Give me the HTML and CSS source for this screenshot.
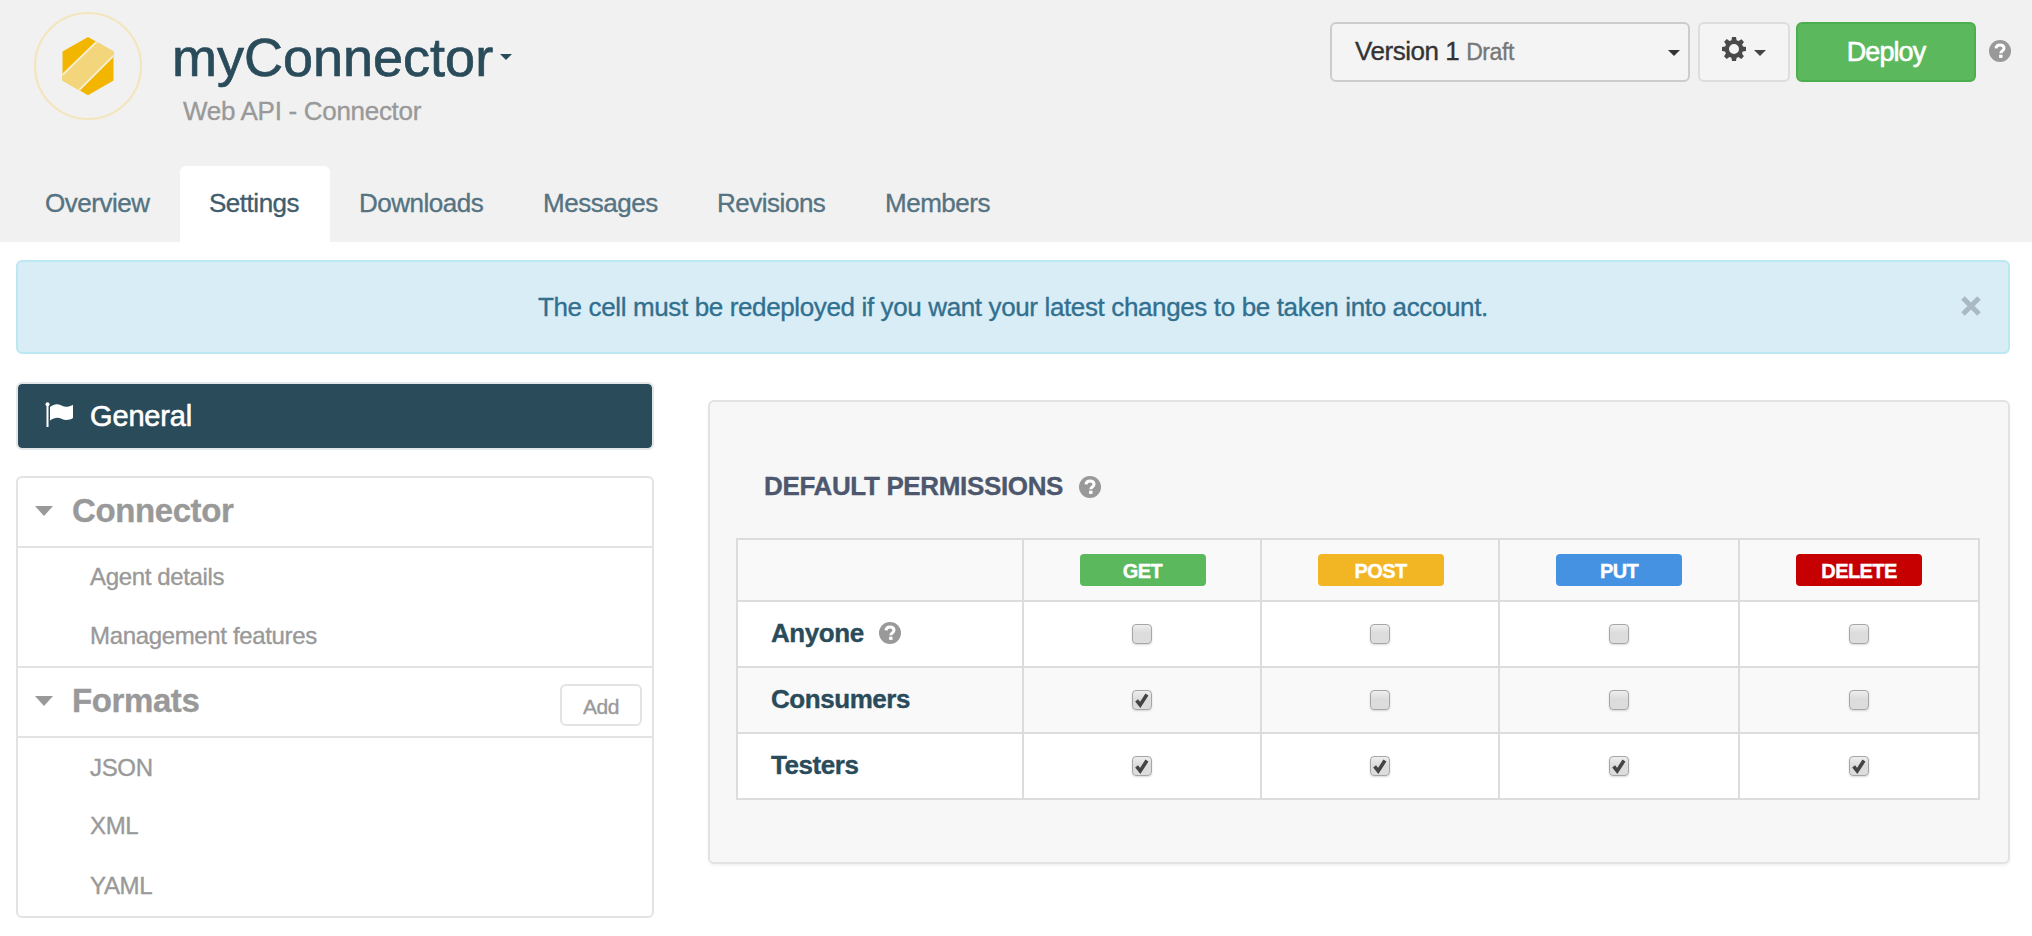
FILE: index.html
```html
<!DOCTYPE html>
<html lang="en">
<head>
<meta charset="utf-8">
<title>myConnector - Settings</title>
<link rel="stylesheet" href="styles.css">
</head>
<body>
<svg class="defs" width="0" height="0" aria-hidden="true">
  <symbol id="help" viewBox="0 0 22 22">
    <circle cx="11" cy="11" r="11" fill="#999"/>
    <path d="M7 8.400C7.200 5.900 8.800 4.900 11 4.900c2.400 0 4 1.300 4 3.300 0 2.600-3.200 2.600-3.200 5" fill="none" stroke="#fff" stroke-width="3"/>
    <rect x="10.100" y="14.700" width="3.400" height="3.200" fill="#fff"/>
  </symbol>
</svg>
<header class="header">
  <div class="topbar">
    <svg class="logo" viewBox="0 0 108 108">
      <circle cx="54" cy="54" r="53" fill="none" stroke="#f3e5be" stroke-width="2.200"/>
      <clipPath id="hex"><path d="M54 25l25.500 14.500v29L54 83.200 28.500 68.500v-29z"/></clipPath>
      <g clip-path="url(#hex)">
        <rect x="20" y="20" width="70" height="70" fill="#f2b600"/>
        <path d="M72 20.600L19 72l17 15.300 54-54z" fill="#f3d57b" stroke="#f8f0d8" stroke-width="1.800"/>
      </g>
    </svg>
    <div class="titles">
      <h1 class="title"><span class="name">myConnector</span><i class="caret caret-title"></i></h1>
      <div class="subtitle">Web API - Connector</div>
    </div>
    <div class="actions">
      <div class="select"><span class="version">Version 1 <small>Draft</small></span><i class="caret"></i></div>
      <button class="gear-btn">
        <svg class="gear" viewBox="0 0 24 24"><path fill="#4a4a4a" fill-rule="evenodd" d="M10 0h4l.6 3.300 2 .8L19.400 2.200l2.600 2.700-1.900 2.700.9 2L24 10v4l-3.200.6-.8 2 1.900 2.700-2.700 2.700-2.700-1.900-2 .9L14 24h-4l-.6-3.200-2-.8-2.700 1.900L2 19.200l1.900-2.700-.9-2L0 14v-4l3.200-.6.8-2L2.100 4.700 4.800 2.100l2.700 1.900 2-.8zM12 7a5 5 0 1 0 0 10 5 5 0 0 0 0-10z"/></svg>
        <i class="caret caret-gear"></i>
      </button>
      <button class="deploy">Deploy</button>
      <svg class="help help-top"><use href="#help"/></svg>
    </div>
  </div>
  <nav class="tabs">
    <a class="tab t1">Overview</a><a class="tab t2 active">Settings</a><a class="tab t3">Downloads</a><a class="tab t4">Messages</a><a class="tab t5">Revisions</a><a class="tab t6">Members</a>
  </nav>
</header>
<div class="alert">
  <span class="alert-text">The cell must be redeployed if you want your latest changes to be taken into account.</span>
  <svg class="close" viewBox="0 0 20 20"><path d="M2 2l16 16M18 2L2 18" stroke="#a9bac3" stroke-width="5"/></svg>
</div>
<main class="main">
  <aside class="side">
    <div class="general">
      <svg class="flag" viewBox="0 0 28 26"><circle cx="2" cy="2.200" r="2" fill="#fff"/><path fill="#fff" d="M1 2h2v23H1zM4.500 5C9 1.500 12 1.500 16 3.500s7 1.500 11.500-.8V16c-4 2.500-8 2.500-11.500.8S9 15.300 4.500 18.500z"/></svg>
      <span>General</span>
    </div>
    <div class="menu">
      <div class="group"><i class="tri"></i><span class="gname">Connector</span></div>
      <div class="items two"><a>Agent details</a><a>Management features</a></div>
      <div class="group"><i class="tri"></i><span class="gname">Formats</span><button class="add">Add</button></div>
      <div class="items three"><a>JSON</a><a>XML</a><a>YAML</a></div>
    </div>
  </aside>
  <section class="panel">
    <h2 class="ptitle"><span>DEFAULT PERMISSIONS</span><svg class="help"><use href="#help"/></svg></h2>
    <div class="grid">
      <div class="cell h"></div><div class="cell h"><b class="badge get">GET</b></div><div class="cell h"><b class="badge post">POST</b></div><div class="cell h"><b class="badge put">PUT</b></div><div class="cell h"><b class="badge delete">DELETE</b></div>
      <div class="cell who">Anyone<svg class="help"><use href="#help"/></svg></div><div class="cell"><i class="box"></i></div><div class="cell"><i class="box"></i></div><div class="cell"><i class="box"></i></div><div class="cell"><i class="box"></i></div>
      <div class="cell who h">Consumers</div><div class="cell h"><i class="box on"><svg viewBox="0 0 20 20"><path d="M4 10.500l4 5L15.500 4" /></svg></i></div><div class="cell h"><i class="box"></i></div><div class="cell h"><i class="box"></i></div><div class="cell h"><i class="box"></i></div>
      <div class="cell who">Testers</div><div class="cell"><i class="box on"><svg viewBox="0 0 20 20"><path d="M4 10.500l4 5L15.500 4" /></svg></i></div><div class="cell"><i class="box on"><svg viewBox="0 0 20 20"><path d="M4 10.500l4 5L15.500 4" /></svg></i></div><div class="cell"><i class="box on"><svg viewBox="0 0 20 20"><path d="M4 10.500l4 5L15.500 4" /></svg></i></div><div class="cell"><i class="box on"><svg viewBox="0 0 20 20"><path d="M4 10.500l4 5L15.500 4" /></svg></i></div>
    </div>
  </section>
</main>
</body>
</html>
```
FILE: styles.css
```css
* { box-sizing: border-box; }
body { margin: 0; width: 2032px; height: 936px; overflow: hidden; background: #fff; font-family: "Liberation Sans", Arial, sans-serif; font-size: 26px; color: #333; -webkit-text-stroke: .35px currentColor; }
button { font-family: inherit; padding: 0; margin: 0; }
svg { display: block; flex: none; }
.defs { display: none; }
.header { height: 242px; background: #f1f1f1; display: flex; flex-direction: column; justify-content: space-between; }
.topbar { display: flex; padding: 12px 21px 0 34px; }
.logo { width: 108px; height: 108px; }
.titles { margin-left: 30px; }
.title { margin: 14px 0 0; font-weight: normal; font-size: 54px; line-height: 62px; color: #294b5a; display: flex; align-items: center; -webkit-text-stroke-width: .7px; }
.caret { width: 0; height: 0; border: 6px solid transparent; border-top-color: #333; border-bottom: 0; }
.caret-title { margin-left: 7px; border-top-color: #294b5a; }
.subtitle { margin: 8px 0 0 11px; line-height: 30px; letter-spacing: -.3px; color: #999; }
.actions { margin-left: auto; display: flex; align-items: flex-start; padding-top: 10px; }
.select { width: 360px; height: 60px; border: 2px solid #ccc; border-radius: 6px; background: #f4f4f4; display: flex; align-items: center; justify-content: space-between; padding: 0 8px 2px 23px; letter-spacing: -.45px; }
.select .caret { margin-top: 3px; }
.select small { font-size: 23px; color: #777; letter-spacing: -.4px; }
.gear-btn { margin-left: 8px; width: 92px; height: 60px; border: 2px solid #ddd; border-radius: 6px; background: #f4f4f4; display: flex; align-items: center; padding-left: 22px; }
.gear { width: 24px; height: 24px; margin-bottom: 6px; }
.caret-gear { margin: 2px 0 0 8px; border-top-color: #444; }
.deploy { margin-left: 6px; width: 180px; height: 60px; border: 2px solid #4cae4c; border-radius: 6px; background: #5cb85c; color: #fff; font-size: 27px; letter-spacing: -.9px; -webkit-text-stroke: .6px #fff; }
.help { width: 22px; height: 22px; }
.help-top { margin: 18px 0 0 13px; }
.tabs { display: flex; padding-left: 15px; }
.tab { height: 76px; padding: 0 29px; line-height: 74px; letter-spacing: -.48px; color: #557382; border-radius: 6px 6px 0 0; white-space: nowrap; }
.tab.active { background: #fff; color: #3f5d6d; }
.t1 { width: 165px; padding-left: 30px; }
.t2 { width: 150px; }
.t3 { width: 184px; }
.t4 { width: 174px; }
.t5 { width: 168px; }
.alert { margin: 18px 22px 0 16px; height: 94px; border: 2px solid #bce8f1; border-radius: 6px; background: #d9edf7; display: flex; align-items: center; color: #31708f; padding-left: 520px; }
.alert-text { letter-spacing: -.37px; white-space: nowrap; }
.close { width: 20px; height: 20px; margin: 0 27px 2px auto; }
.main { display: flex; padding: 0 22px 0 16px; }
.side { width: 638px; padding-top: 28px; }
.general { height: 68px; border: 2px solid #e2e6e8; border-radius: 6px; background: #294b5a; background-clip: padding-box; color: #fff; display: flex; align-items: center; padding-left: 27px; font-size: 29px; letter-spacing: -.15px; -webkit-text-stroke: .6px #fff; }
.flag { width: 29px; height: 26px; margin: 0 16px 2px 0; }
.menu { margin-top: 26px; border: 2px solid #e3e3e3; border-radius: 6px; }
.group { display: flex; align-items: center; height: 68px; padding: 0 0 2px 17px; color: #999; }
.tri { border: 9.500px solid transparent; border-top: 10px solid #999; border-bottom: 0; }
.gname { margin-left: 19px; font-weight: bold; font-size: 33px; letter-spacing: -.4px; }
.add { margin: 8px 10px 0 auto; width: 82px; height: 42px; border: 2px solid #e3e3e3; border-radius: 6px; background: #fff; color: #999; font-size: 21px; padding-top: 3px; letter-spacing: -.4px; }
.items { display: flex; flex-direction: column; border-top: 2px solid #e3e3e3; font-size: 24px; letter-spacing: -.35px; color: #999; padding-left: 72px; }
.items a { line-height: 60px; height: 60px; }
.two { height: 122px; border-bottom: 2px solid #e3e3e3; }
.two a { line-height: 57px; }
.three { height: 180px; }
.three a:first-child { height: 58px; }
.panel { margin: 46px 0 0 54px; width: 1302px; height: 464px; border: 2px solid #e3e3e3; border-radius: 6px; background: #f7f7f7; box-shadow: 0 2px 3px rgba(0,0,0,.05); padding: 68px 0 0 26px; }
.ptitle { margin: 0 0 0 28px; height: 32px; display: flex; align-items: center; font-size: 26px; letter-spacing: -.35px; color: #4d586e; }
.ptitle .help { margin: 2px 0 0 16px; }
.grid { margin-top: 36px; width: 1244px; display: grid; grid-template-columns: 286px 238px 238px 240px 240px; grid-template-rows: 62px repeat(3, 66px); border: solid #dcdcdc; border-width: 2px 0 0 2px; }
.cell { border: solid #dcdcdc; border-width: 0 2px 2px 0; background: #fff; display: flex; align-items: center; justify-content: center; }
.cell.h { background: #f9f9f9; }
.cell.who { justify-content: flex-start; padding: 0 0 2px 33px; font-weight: bold; letter-spacing: -.45px; color: #294b5a; }
.who .help { margin-left: 15px; }
.badge { width: 126px; height: 32px; border-radius: 4px; color: #fff; font-size: 20px; line-height: 34px; letter-spacing: -.6px; text-align: center; }
.get, .post { margin-left: 1px; }
.get { background: #5cb85c; }
.post { background: #f2b524; }
.put { background: #4592e3; }
.delete { background: #c60000; }
.box { width: 20px; height: 20px; border: 1.500px solid #a6a6a6; border-radius: 4px; background: linear-gradient(#eee, #dcdcdc 45%, #ddd); box-shadow: 0 1px 2px rgba(0,0,0,.15); }
.box svg { width: 18px; height: 18px; }
.box path { fill: none; stroke: #444; stroke-width: 4; }
```
